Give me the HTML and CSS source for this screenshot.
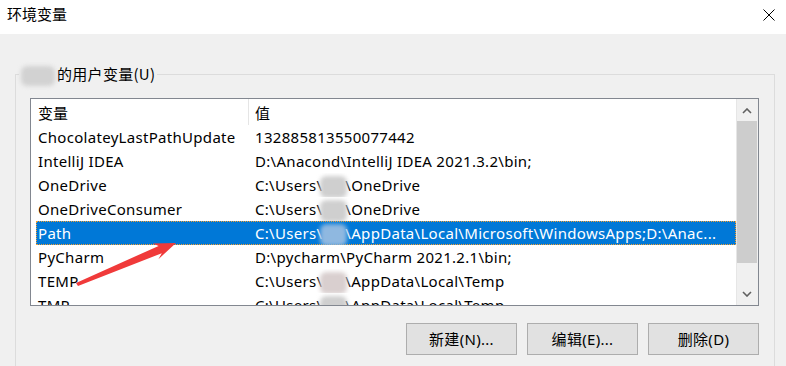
FILE: index.html
```html
<!DOCTYPE html>
<html lang="zh-CN">
<head>
  <meta charset="UTF-8">
  <meta name="viewport" content="width=device-width, initial-scale=1.0">
  <title>环境变量</title>
  <link rel="stylesheet" href="styles.css">
</head>
<body>
  <div class="titlebar">
    <span class="title">环境变量</span>
    <svg class="close" width="12" height="12" viewBox="0 0 12 12">
      <path d="M0.5 0.5 L11.5 11.5 M11.5 0.5 L0.5 11.5" stroke="#000" stroke-width="1" fill="none"/>
    </svg>
  </div>

  <div class="content">
    <fieldset class="group">
      <legend><span class="smudge smudge-legend"></span>的用户变量(U)</legend>

      <div class="listview">
        <div class="list-main">
          <div class="list-header">
            <div class="hcell hcell-name">变量</div>
            <div class="hcell hcell-value">值</div>
          </div>
          <div class="row">
            <div class="cell cell-name">ChocolateyLastPathUpdate</div>
            <div class="cell cell-value">132885813550077442</div>
          </div>
          <div class="row">
            <div class="cell cell-name">IntelliJ IDEA</div>
            <div class="cell cell-value">D:\Anacond\IntelliJ IDEA 2021.3.2\bin;</div>
          </div>
          <div class="row">
            <div class="cell cell-name">OneDrive</div>
            <div class="cell cell-value">C:\Users\<span class="smudge"></span>\OneDrive</div>
          </div>
          <div class="row">
            <div class="cell cell-name">OneDriveConsumer</div>
            <div class="cell cell-value">C:\Users\<span class="smudge"></span>\OneDrive</div>
          </div>
          <div class="row selected">
            <div class="cell cell-name">Path</div>
            <div class="cell cell-value">C:\Users\<span class="smudge smudge-blue"></span>\AppData\Local\Microsoft\WindowsApps;D:\Anac...</div>
          </div>
          <div class="row">
            <div class="cell cell-name">PyCharm</div>
            <div class="cell cell-value">D:\pycharm\PyCharm 2021.2.1\bin;</div>
          </div>
          <div class="row">
            <div class="cell cell-name">TEMP</div>
            <div class="cell cell-value">C:\Users\<span class="smudge smudge-warm"></span>\AppData\Local\Temp</div>
          </div>
          <div class="row">
            <div class="cell cell-name">TMP</div>
            <div class="cell cell-value">C:\Users\<span class="smudge"></span>\AppData\Local\Temp</div>
          </div>
        </div>
        <div class="scrollbar">
          <div class="sb-btn sb-up">
            <svg width="10" height="6" viewBox="0 0 10 6"><path d="M1 5 L5 1 L9 5" stroke="#606060" stroke-width="1.6" fill="none"/></svg>
          </div>
          <div class="sb-track"><div class="sb-thumb"></div></div>
          <div class="sb-btn sb-down">
            <svg width="10" height="6" viewBox="0 0 10 6"><path d="M1 1 L5 5 L9 1" stroke="#606060" stroke-width="1.6" fill="none"/></svg>
          </div>
        </div>
      </div>

      <div class="actions">
        <button class="btn">新建(N)...</button>
        <button class="btn">编辑(E)...</button>
        <button class="btn">删除(D)</button>
      </div>
    </fieldset>
  </div>

  <!-- annotation arrow drawn over the dialog -->
  <svg class="annotation" width="786" height="366" viewBox="0 0 786 366">
    <polygon points="76,283 158.6,245.9 152.8,243.6 176,243 158.4,259.2 161.8,253.2 78,286" fill="#f03a3a"/>
  </svg>
</body>
</html>
```

FILE: styles.css
```css
* { margin:0; padding:0; box-sizing:border-box; }
html, body { width:786px; height:366px; overflow:hidden; }
body {
  font-family: "Noto Sans", "Noto Sans CJK SC", sans-serif;
  font-size:15px;
  color:#000;
  background:#f0f0f0;
  position:relative;
}

.titlebar {
  height:34px; background:#fff;
  display:flex; align-items:flex-start; justify-content:space-between;
  padding:0 11px 0 7px;
}
.title { line-height:20px; margin-top:4px; font-family:"Noto Sans CJK SC", sans-serif; }
.close { margin-top:9px; }

.content { padding:30px 0 0 15px; }
.group {
  width:760px; height:420px;
  border:1px solid #dcdcdc;
  padding:0;
}
.group legend {
  margin-left:3px; padding:0 2px;
  line-height:20px; letter-spacing:.3px;
  font-family:"Noto Sans CJK SC", sans-serif;
}

.smudge {
  display:inline-block;
  width:27px; height:22px;
  vertical-align:middle;
  background:#cfcfcf;
  border-radius:6px;
  filter:blur(2px);
  margin:0 -2px;
}
.smudge-legend { width:34px; height:20px; margin:0 2px 0 0; background:#d2d2d2; }
.smudge-blue { background:#8fb8e0; }
.smudge-warm { background:#d9cfcf; }

.listview {
  margin:12px 0 0 14px;
  width:729px; height:208px;
  border:1px solid #828790;
  background:#fff;
  display:flex;
}
.list-main { flex:1; padding-left:5px; overflow:hidden; }
.list-header { display:flex; height:26px; }
.hcell { line-height:24px; padding-top:2px; font-family:"Noto Sans CJK SC", sans-serif; }
.hcell-name { width:213px; padding-left:2px; border-right:1px solid #e5e5e5; }
.hcell-value { padding-left:6px; }

.row { display:flex; height:24px; line-height:24px; white-space:nowrap; letter-spacing:.3px; }
.cell-name { width:217px; flex-shrink:0; padding-left:2px; }
.cell-value { flex:1; min-width:0; padding-left:2px; overflow:hidden; text-overflow:ellipsis; }
.row.selected {
  background:#0078d7; color:#fff;
  outline:1px dotted #f5a030; outline-offset:-1px;
}

.scrollbar {
  width:22px;
  border-left:1px solid #e6e6e6;
  background:#f0f0f0;
  display:flex; flex-direction:column;
}
.sb-btn { display:flex; align-items:center; justify-content:center; padding-right:1px; }
.sb-up { height:22px; padding-top:2px; }
.sb-down { height:21px; }
.sb-track { flex:1; }
.sb-thumb { height:142px; background:#cdcdcd; margin-right:1px; }

.actions {
  display:flex; justify-content:flex-end; gap:10px;
  width:729px; margin:17px 0 0 14px;
}
.btn {
  width:111px; height:32px;
  background:#e1e1e1; border:1px solid #adadad;
  font-family:"Noto Sans", "Noto Sans CJK SC", sans-serif;
  font-size:15px; letter-spacing:.3px; color:#000;
}

.annotation { position:absolute; left:0; top:0; pointer-events:none; }
```
